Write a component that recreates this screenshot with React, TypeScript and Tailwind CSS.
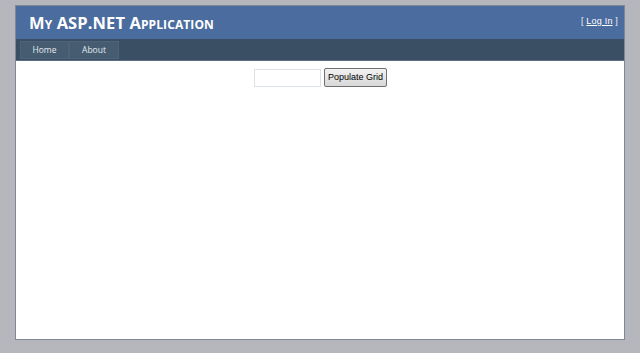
import React from 'react';

export default function App() {
  return (
    <div className="w-[640px] h-[353px] bg-[#b6b7bc] pt-[5px] pl-[15px] overflow-hidden" style={{ fontFamily: '"Open Sans", sans-serif' }}>
      <div className="w-[610px] h-[335px] bg-white border border-[#7f8897] flex flex-col">
        {/* Header */}
        <div className="h-[33px] bg-[#4b6c9e] flex items-start justify-between">
          <h1
            className="text-white font-bold text-[16.5px] leading-none pl-[13px] pt-[9px] tracking-[0.1px]"
            style={{ fontVariant: 'small-caps' }}
          >
            My ASP.NET Application
          </h1>
          <div className="text-[9px] text-[#e8edf3] pr-[6px] pt-[9px] font-['Liberation_Sans'] tracking-[0.2px]">
            [&nbsp;<a className="underline text-white">Log In</a>&nbsp;]
          </div>
        </div>

        {/* Nav */}
        <div className="h-[22px] bg-[#3a4f63] border-b border-[#5c6f82] flex items-start pl-[4px] pt-[2px]">
          <div className="h-[18px] w-[49px] bg-[#465c71] border border-[#4e6379] text-[8.5px] text-[#e4eaf0] flex items-center justify-center">
            Home
          </div>
          <div className="h-[18px] w-[50px] bg-[#465c71] border border-[#4e6379] text-[8.5px] text-[#e4eaf0] flex items-center justify-center">
            About
          </div>
        </div>

        {/* Content */}
        <div className="flex-1 flex justify-center items-start pt-[7px] pl-[1px]">
          <div className="flex items-center gap-[3px]">
            <input className="w-[67px] h-[18px] border border-[#dde2e8] bg-white outline-none" />
            <button className="h-[19px] px-[3px] text-[9px] text-black font-['Liberation_Sans'] border border-[#707070] rounded-[2px] bg-gradient-to-b from-[#f2f2f2] to-[#d8d8d8]">
              Populate Grid
            </button>
          </div>
        </div>
      </div>
    </div>
  );
}
